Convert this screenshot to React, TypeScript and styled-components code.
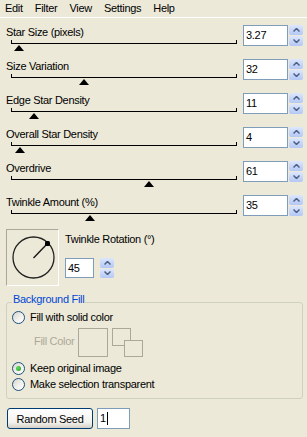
import React from "react";
import styled, {createGlobalStyle} from "styled-components";

const GlobalStyle = createGlobalStyle`
  html, body {
    margin: 0;
    padding: 0;
  }
  body {
    background: #ece9d8;
    font-family: "Liberation Sans", Arial, sans-serif;
    font-size: 11px;
    letter-spacing: -0.3px;
    color: #000;
  }
`;

const sliders = [
  {label: "Star Size (pixels)", value: "3.27", pos: 3.27},
  {label: "Size Variation", value: "32", pos: 32},
  {label: "Edge Star Density", value: "11", pos: 10},
  {label: "Overall Star Density", value: "4", pos: 3.5},
  {label: "Overdrive", value: "61", pos: 61},
  {label: "Twinkle Amount (%)", value: "35", pos: 35},
];

function Chevron({down}: {down?: boolean}) {
  return (
    <svg width="7" height="4" viewBox="0 0 7 4">
      <polyline
        points={down ? "0.5,0.5 3.5,3.5 6.5,0.5" : "0.5,3.5 3.5,0.5 6.5,3.5"}
        fill="none"
        stroke="#4d6185"
        strokeWidth="1.5"
      />
    </svg>
  );
}

function Spin({h}: {h: number}) {
  return (
    <Spinner h={h}>
      <SpinButton>
        <Chevron />
      </SpinButton>
      <SpinButton>
        <Chevron down />
      </SpinButton>
    </Spinner>
  );
}

function Radio({label, checked}: {label: string; checked?: boolean}) {
  return (
    <OptionRow>
      <RadioCircle>{checked && <RadioDot />}</RadioCircle>
      <span>{label}</span>
    </OptionRow>
  );
}

function App() {
  return (
    <Window>
      <GlobalStyle />
      <MenuBar>
        <span>Edit</span>
        <span>Filter</span>
        <span>View</span>
        <span>Settings</span>
        <span>Help</span>
      </MenuBar>

      <SliderList>
        {sliders.map((s) => (
          <SliderRow key={s.label}>
            <SliderBody>
              <Label>{s.label}</Label>
              <Track>
                <Thumb style={{left: `${s.pos}%`}} />
              </Track>
            </SliderBody>
            <ValueBox gap={1}>
              <NumberField w={45} h={21}>
                {s.value}
              </NumberField>
              <Spin h={21} />
            </ValueBox>
          </SliderRow>
        ))}
      </SliderList>

      <RotationSection>
        <Dial>
          <svg width="51" height="55" viewBox="0 0 51 55">
            <circle cx="26.5" cy="27.5" r="20.5" fill="none" stroke="#222" strokeWidth="1.3" />
            <line x1="26.5" y1="28" x2="40.5" y2="13.5" stroke="#111" strokeWidth="1.3" />
            <rect x="38" y="11" width="5" height="5" rx="1.5" fill="#000" />
          </svg>
        </Dial>
        <RotationControls>
          <Label>Twinkle Rotation (°)</Label>
          <ValueBox gap={6} style={{marginTop: 12}}>
            <NumberField w={29} h={20}>
              45
            </NumberField>
            <Spin h={20} />
          </ValueBox>
        </RotationControls>
      </RotationSection>

      <GroupBox>
        <Legend>Background Fill</Legend>
        <Radio label="Fill with solid color" />
        <FillRow>
          <FillLabel>Fill Color</FillLabel>
          <ColorSwatch />
          <svg width="31" height="30" viewBox="0 0 31 30">
            <rect x="0.5" y="0.5" width="18" height="17" fill="none" stroke="#aca899" />
            <rect x="12.5" y="12.5" width="18" height="16" fill="#ece9d8" stroke="#aca899" />
          </svg>
        </FillRow>
        <Radio label="Keep original image" checked />
        <Radio label="Make selection transparent" />
      </GroupBox>

      <BottomBar>
        <PushButton>Random Seed</PushButton>
        <NumberField w={33} h={21}>
          1<Caret />
        </NumberField>
      </BottomBar>
    </Window>
  );
}

const Window = styled.div`
  width: 307px;
  height: 437px;
  display: flex;
  flex-direction: column;
  overflow: hidden;
`;

const MenuBar = styled.div`
  display: flex;
  gap: 12px;
  padding-left: 5px;
  height: 17px;
  line-height: 17px;
  border-bottom: 1px solid #fff;
`;

const SliderList = styled.div`
  display: flex;
  flex-direction: column;
  padding-top: 7px;
`;

const SliderRow = styled.div`
  display: flex;
  height: 34px;
  padding: 0 4px 0 6px;
  box-sizing: border-box;
`;

const SliderBody = styled.div`
  flex: 1;
  display: flex;
  flex-direction: column;
`;

const Label = styled.div`
  height: 14px;
  line-height: 14px;
  white-space: nowrap;
`;

const Track = styled.div`
  position: relative;
  margin: 1px 6px 0 5px;
  height: 3px;
  border: 1px solid #000;
  border-top: none;
`;

const Thumb = styled.div`
  position: absolute;
  top: 5px;
  width: 0;
  height: 0;
  transform: translateX(-5px);
  border-left: 5px solid transparent;
  border-right: 5px solid transparent;
  border-bottom: 6px solid #000;
`;

const ValueBox = styled.div<{gap: number}>`
  display: flex;
  align-items: flex-start;
  gap: ${({gap}) => gap}px;
`;

const NumberField = styled.div<{w: number; h: number}>`
  width: ${({w}) => w}px;
  height: ${({h}) => h}px;
  line-height: ${({h}) => h - 2}px;
  box-sizing: border-box;
  border: 1px solid #7f9db9;
  background: #fff;
  padding-left: 2px;
  display: flex;
  align-items: center;
`;

const Caret = styled.span`
  display: inline-block;
  width: 1px;
  height: 13px;
  background: #000;
  margin-left: 1px;
`;

const Spinner = styled.div<{h: number}>`
  width: 14px;
  height: ${({h}) => h}px;
  display: flex;
  flex-direction: column;
  gap: 1px;
`;

const SpinButton = styled.div`
  flex: 1;
  display: flex;
  align-items: center;
  justify-content: center;
  border-radius: 2px;
  background: linear-gradient(180deg, #dde7fd 0%, #c3d3f8 60%, #b4c8f6 100%);
`;

const RotationSection = styled.div`
  display: flex;
  gap: 6px;
  padding-left: 6px;
`;

const Dial = styled.div`
  width: 53px;
  height: 57px;
  box-sizing: border-box;
  border: 1px solid;
  border-color: #aca899 #fff #fff #aca899;
`;

const RotationControls = styled.div`
  display: flex;
  flex-direction: column;
  padding-top: 3px;
`;

const GroupBox = styled.div`
  position: relative;
  margin: 16px 4px 0 6px;
  border: 1px solid #d0d0bf;
  border-radius: 3px;
  padding: 6px 0 6px 5px;
`;

const Legend = styled.span`
  position: absolute;
  top: -11px;
  left: 5px;
  padding: 0 1px;
  line-height: 14px;
  background: #ece9d8;
  color: #0046d5;
`;

const OptionRow = styled.div`
  display: flex;
  align-items: center;
  gap: 5px;
  height: 16px;
`;

const RadioCircle = styled.span`
  width: 13px;
  height: 13px;
  box-sizing: border-box;
  border-radius: 50%;
  border: 1px solid #1c5180;
  background: linear-gradient(135deg, #d6d5ce 0%, #f4f3ee 60%, #fff 100%);
  display: flex;
  align-items: center;
  justify-content: center;
`;

const RadioDot = styled.span`
  width: 5px;
  height: 5px;
  border-radius: 50%;
  background: radial-gradient(circle at 35% 35%, #62d962, #21a121);
`;

const FillRow = styled.div`
  display: flex;
  align-items: flex-start;
  gap: 4px;
  margin: 3px 0 3px 22px;
  height: 29px;
`;

const FillLabel = styled.span`
  flex: 0 0 40px;
  margin-top: 6px;
  line-height: 14px;
  white-space: nowrap;
  color: #aca899;
`;

const ColorSwatch = styled.div`
  width: 30px;
  height: 29px;
  box-sizing: border-box;
  border: 1px solid #aca899;
`;

const BottomBar = styled.div`
  display: flex;
  gap: 4px;
  padding-left: 7px;
  margin-top: 9px;
`;

const PushButton = styled.div`
  width: 86px;
  height: 21px;
  box-sizing: border-box;
  border: 1px solid #003c74;
  border-radius: 3px;
  background: linear-gradient(180deg, #fff 0%, #f3f2ee 70%, #d6d0c5 100%);
  display: flex;
  align-items: center;
  justify-content: center;
`;

export default App;
